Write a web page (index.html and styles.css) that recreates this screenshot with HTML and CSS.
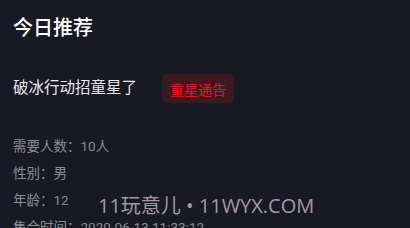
FILE: index.html
```html
<!DOCTYPE html>
<html lang="zh">
<head>
<meta charset="utf-8">
<link rel="stylesheet" href="styles.css">
</head>
<body>
<div class="page">
  <h1 class="title">今日推荐</h1>
  <div class="head">
    <span class="name">破冰行动招童星了</span>
    <span class="badge">童星通告</span>
  </div>
  <div class="rows">
    <div class="row">需要人数：10人</div>
    <div class="row">性别：男</div>
    <div class="row">年龄：12</div>
    <div class="row">集合时间：2020-06-13 11:33:12</div>
  </div>
</div>
<div class="watermark">11玩意儿 • 11WYX.COM</div>
</body>
</html>
```
FILE: styles.css
```css
html, body {
  margin: 0;
  padding: 0;
  background: #171a24;
  overflow: hidden;
  height: 228px;
}
body {
  font-family: Roboto, "Noto Sans CJK SC", sans-serif;
  position: relative;
}
.page {
  padding: 14px 13px 0;
}
.title {
  margin: 0;
  font-size: 20px;
  line-height: 28px;
  font-weight: 500;
  color: #ffffff;
}
.head {
  display: flex;
  align-items: center;
  gap: 25px;
  margin-top: 32px;
  height: 29px;
}
.name {
  font-size: 15.5px;
  line-height: 29px;
  color: #e8e8ea;
}
.badge {
  display: inline-flex;
  align-items: center;
  height: 29px;
  padding: 0 8px;
  border-radius: 5px;
  background: #3a1a1f;
  color: #ec1018;
  font-size: 14px;
}
.rows {
  margin-top: 30px;
}
.row {
  font-size: 13.5px;
  line-height: 27px;
  color: #8b8d94;
}
.watermark {
  position: absolute;
  left: 98px;
  top: 191px;
  font-family: "Open Sans", "Noto Sans CJK SC", sans-serif;
  font-size: 20px;
  line-height: 30px;
  color: #a698a8;
  white-space: nowrap;
}
```
